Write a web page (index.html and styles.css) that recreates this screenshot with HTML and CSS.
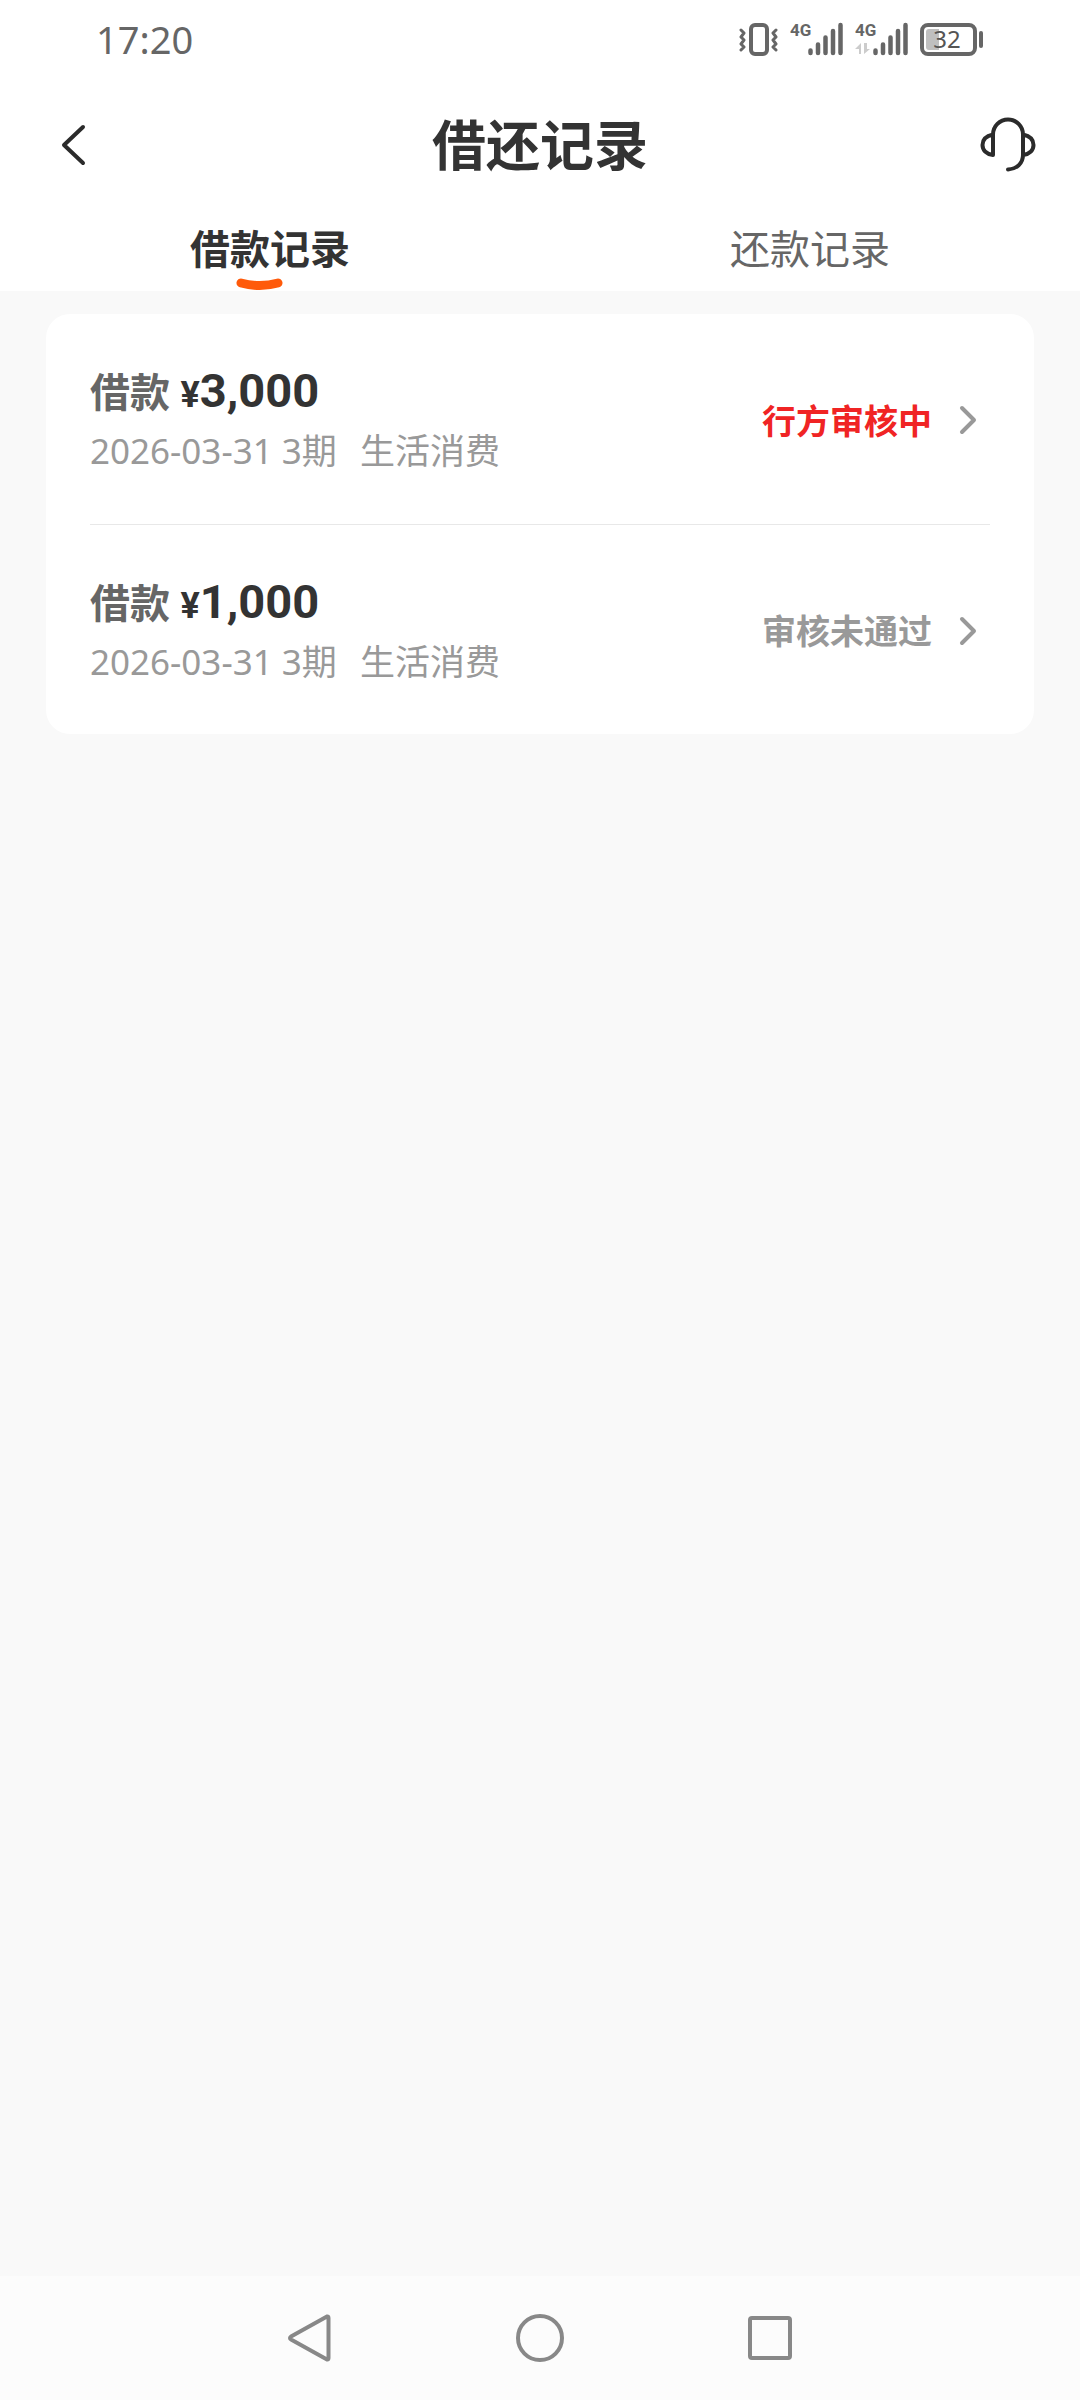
FILE: index.html
```html
<!DOCTYPE html>
<html lang="zh-CN">
<head>
  <meta charset="UTF-8">
  <meta name="viewport" content="width=device-width, initial-scale=1">
  <title>借还记录</title>
  <link rel="stylesheet" href="styles.css">
</head>
<body>

  <div class="status-bar">
    <span class="time">17:20</span>
    <div class="status-icons">
      <svg width="39" height="44" viewBox="0 -4 39 44" fill="none" stroke="#666" stroke-linecap="round" stroke-linejoin="round">
        <rect x="12" y="4" width="16" height="29" rx="4" stroke-width="4"/>
        <path d="M2 9l3 3-3 4 3 3-3 4 3 3-3 3M37 9l-3 3 3 4-3 3 3 4-3 3 3 3" stroke-width="3"/>
      </svg>
      <svg width="53" height="44" viewBox="0 -4 53 44">
        <text class="net" x="0" y="15">4G</text>
        <path d="M20.500 29.500v2.500M28 23.500v8.500M35.500 16.500v15.500M43 10v22M50.500 4v28" stroke="#666" stroke-width="4.500" stroke-linecap="round"/>
      </svg>
      <svg width="53" height="44" viewBox="0 -4 53 44">
        <text class="net" x="0" y="15">4G</text>
        <path d="M0 28l6-6v11H4v-5zM9 22v11l6-5h-3v-6z" fill="#ccc"/>
        <path d="M20.500 29.500v2.500M28 23.500v8.500M35.500 16.500v15.500M43 10v22M50.500 4v28" stroke="#666" stroke-width="4.500" stroke-linecap="round"/>
      </svg>
      <svg width="63" height="44" viewBox="0 -4 63 44">
        <rect x="2" y="4" width="53" height="29" rx="6" fill="none" stroke="#666" stroke-width="4"/>
        <path d="M9 8h10v21H9a3 3 0 0 1-3-3V11a3 3 0 0 1 3-3z" fill="#bfbfbf"/>
        <rect x="59" y="10" width="4" height="17" rx="2" fill="#666"/>
        <text class="battery" x="27" y="27" text-anchor="middle">32</text>
      </svg>
    </div>
  </div>

  <header class="header">
    <button class="icon-btn" aria-label="返回">
      <svg width="28" height="44" viewBox="0 0 28 44" fill="none" stroke="#2b2b2b" stroke-width="4" stroke-linecap="round" stroke-linejoin="round">
        <path d="M23 4L4 22l19 18"/>
      </svg>
    </button>
    <h1>借还记录</h1>
    <button class="icon-btn service" aria-label="客服">
      <svg width="56" height="56" viewBox="0 0 56 56" fill="none" stroke="#2b2b2b" stroke-width="4" stroke-linecap="round" stroke-linejoin="round">
        <path d="M13 38V17.500a15 15 0 0 1 30 0V38c0 8-6 14-15 14.500M13 38C6 37 2.500 33 2.500 28S6 19 13 17.500M43 38c7-1 10.500-5 10.500-10S50 19 43 17.500"/>
      </svg>
    </button>
  </header>

  <nav class="tabs">
    <button class="tab active">借款记录
      <svg class="tab-mark" width="48" height="14" viewBox="0 0 48 14" fill="none" stroke="#ff5a0a" stroke-width="9" stroke-linecap="round">
        <path d="M6 6q19 5 37 0"/>
      </svg>
    </button>
    <button class="tab">还款记录</button>
  </nav>

  <main class="content">
    <div class="card">
      <a class="record" href="#">
        <div class="info">
          <p class="amount">借款 <span class="money"><small>¥</small>3,000</span></p>
          <p class="detail">2026-03-31 3期 <span class="usage">生活消费</span></p>
        </div>
        <span class="state pending">行方审核中</span>
        <svg width="20" height="32" viewBox="0 0 20 32" fill="none" stroke="#999" stroke-width="4" stroke-linecap="round" stroke-linejoin="round">
          <path d="M4 5l12 12L4 29"/>
        </svg>
      </a>
      <a class="record" href="#">
        <div class="info">
          <p class="amount">借款 <span class="money"><small>¥</small>1,000</span></p>
          <p class="detail">2026-03-31 3期 <span class="usage">生活消费</span></p>
        </div>
        <span class="state">审核未通过</span>
        <svg width="20" height="32" viewBox="0 0 20 32" fill="none" stroke="#999" stroke-width="4" stroke-linecap="round" stroke-linejoin="round">
          <path d="M4 5l12 12L4 29"/>
        </svg>
      </a>
    </div>
  </main>

  <nav class="system-nav">
    <button aria-label="后退">
      <svg width="48" height="48" viewBox="0 0 48 48" fill="none" stroke="#888" stroke-width="4" stroke-linejoin="round">
        <path d="M41 2.500q1.500-.5 1.500 1.500v40q0 2-1.500 1.500L5 25.500q-2-1.500 0-3z"/>
      </svg>
    </button>
    <button aria-label="主屏幕">
      <svg width="48" height="48" viewBox="0 0 48 48" fill="none" stroke="#888" stroke-width="4">
        <circle cx="24" cy="24" r="22"/>
      </svg>
    </button>
    <button aria-label="最近任务">
      <svg width="48" height="48" viewBox="0 0 48 48" fill="none" stroke="#888" stroke-width="4">
        <rect x="4" y="4" width="40" height="40" rx="2"/>
      </svg>
    </button>
  </nav>

</body>
</html>
```
FILE: styles.css
```css
* {
  box-sizing: border-box;
  margin: 0;
  padding: 0;
}

body {
  display: flex;
  flex-direction: column;
  min-height: 100vh;
  font-family: "Noto Sans", "Noto Sans CJK SC", sans-serif;
  background-color: #f9f9f9;
  color: #333;
}

button {
  background: none;
  border: none;
  font-family: inherit;
  color: inherit;
  cursor: pointer;
}

svg {
  display: block;
  flex-shrink: 0;
}

.status-bar {
  display: flex;
  justify-content: space-between;
  align-items: center;
  height: 78px;
  padding: 0 97px 0 96px;
  background-color: #fff;
}

.time {
  font-size: 38px;
  line-height: 48px;
  color: #666;
}

.status-icons {
  display: flex;
  gap: 12px;
}

.net {
  font-family: "Roboto", sans-serif;
  font-size: 17px;
  font-weight: bold;
  fill: #666;
}

.battery {
  font-size: 24px;
  fill: #555;
}

.header {
  display: grid;
  grid-template-columns: 1fr auto 1fr;
  align-items: center;
  height: 134px;
  padding: 0 44px;
  background-color: #fff;
}

.header h1 {
  font-size: 54px;
  line-height: 64px;
}

.icon-btn {
  display: flex;
  justify-self: start;
  padding-left: 16px;
}

.service {
  justify-self: end;
}

.tabs {
  display: flex;
  background-color: #fff;
}

.tab {
  position: relative;
  flex: 1;
  height: 79px;
  padding-bottom: 6px;
  font-size: 40px;
  line-height: 48px;
  color: #666;
}

.tab.active {
  font-weight: bold;
  color: #333;
}

.tab-mark {
  position: absolute;
  left: 48%;
  bottom: 0;
  transform: translateX(-50%);
}

.content {
  flex: 1;
  padding: 23px 46px;
}

.card {
  padding: 0 44px;
  background-color: #fff;
  border-radius: 24px;
}

.record {
  display: flex;
  align-items: center;
  height: 210px;
  color: #333;
  text-decoration: none;
}

.record + .record {
  border-top: 1px solid #e8e8e8;
}

.info {
  flex: 1;
}

.amount {
  font-size: 40px;
  font-weight: bold;
  line-height: 60px;
  color: #666;
}

.money {
  font-family: "Roboto", sans-serif;
  font-size: 47px;
  color: #333;
}

.money small {
  font-size: 36px;
}

.detail {
  font-size: 35px;
  line-height: 52px;
  color: #999;
}

.usage {
  margin-left: 14px;
}

.state {
  margin-right: 26px;
  font-size: 34px;
  font-weight: bold;
  color: #999;
}

.state.pending {
  color: #f02424;
}

.record svg {
  margin-right: 12px;
}

.system-nav {
  display: flex;
  height: 124px;
  padding: 0 18%;
  background-color: #fcfcfc;
}

.system-nav button {
  display: flex;
  flex: 1;
  justify-content: center;
  align-items: center;
}
```
